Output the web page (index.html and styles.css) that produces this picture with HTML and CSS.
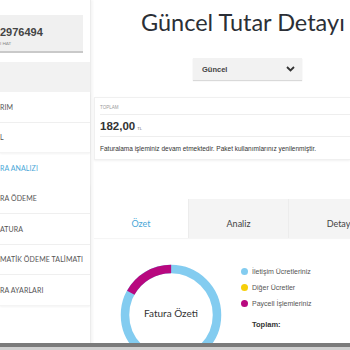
FILE: index.html
```html
<!DOCTYPE html>
<html lang="tr">
<head>
<meta charset="utf-8">
<link rel="stylesheet" href="styles.css">
</head>
<body>
<div class="page">
  <aside class="sidebar">
    <div class="account">
      <div class="acc-num">2976494</div>
      <div class="acc-sub">I HAT</div>
    </div>
    <div class="band"></div>
    <ul class="group">
      <li class="item">RIM</li>
      <li class="item">L</li>
    </ul>
    <div class="item active">RA ANALIZI</div>
    <ul class="group">
      <li class="item">RA ÖDEME</li>
      <li class="item">ATURA</li>
      <li class="item">MATİK ÖDEME TALİMATI</li>
      <li class="item">RA AYARLARI</li>
    </ul>
  </aside>
  <main class="main">
    <h1 class="title">Güncel Tutar Detayı</h1>
    <div class="select">
      <span>Güncel</span>
      <svg class="chev" width="9" height="6" viewBox="0 0 9 6"><path d="M1 1 L4.5 4.5 L8 1" fill="none" stroke="#333" stroke-width="1.8"/></svg>
    </div>
    <section class="card">
      <div class="label">TOPLAM</div>
      <div class="amount">182,00<span class="cur">TL</span></div>
      <p class="note">Faturalama işleminiz devam etmektedir. Paket kullanımlarınız yenilenmiştir.</p>
    </section>
    <section class="panel">
      <div class="tabs">
        <div class="tab on">Özet</div>
        <div class="tab">Analiz</div>
        <div class="tab">Detay</div>
      </div>
      <div class="chart-row">
        <div class="donut">
          <svg width="104" height="104" viewBox="0 0 104 104">
            <circle cx="52" cy="52" r="46" fill="none" stroke="#83ccf0" stroke-width="8.5"/>
            <circle cx="52" cy="52" r="46" fill="none" stroke="#b8087f" stroke-width="8.5" stroke-dasharray="49 300" transform="rotate(-151 52 52)"/>
          </svg>
          <span class="donut-label">Fatura Özeti</span>
        </div>
        <ul class="legend">
          <li><i class="dot blue"></i>İletişim Ücretleriniz</li>
          <li><i class="dot yellow"></i>Diğer Ücretler</li>
          <li><i class="dot pink"></i>Paycell İşlemleriniz</li>
          <li class="total">Toplam:</li>
        </ul>
      </div>
    </section>
  </main>
</div>
<div class="hbar"></div>
</body>
</html>
```
FILE: styles.css
```css
* { box-sizing: border-box; }
html, body { margin: 0; padding: 0; background: #fff; overflow: hidden; height: 350px; }
body { font-family: "Liberation Sans", Arial, sans-serif; color: #333; }
.page { display: flex; width: 350px; height: 350px; overflow: hidden; }
.sidebar {
  width: 91px; flex: none; padding-top: 15px;
  border-right: 1px solid #ececec;
  box-shadow: 2px 0 2px rgba(0,0,0,0.04);
  font-family: "Lato", sans-serif;
}
.account {
  height: 38px; margin-right: 7px; background: #f0f0f0;
  border-bottom: 2px solid #c9c9c9; padding-top: 11px;
}
.acc-num { font-family: "Liberation Sans", Arial, sans-serif; font-weight: bold; font-size: 11px; color: #444; line-height: 13px; }
.acc-sub { font-size: 4.5px; color: #888; margin-top: 2px; line-height: 5px; }
.band { height: 30px; background: #f2f2f2; margin-top: 9px; }
.group { list-style: none; margin: 0; padding: 0; background: #fff; box-shadow: 0 1px 2px rgba(0,0,0,0.05); }
.item {
  height: 30.5px; display: flex; align-items: center;
  font-size: 7px; color: #555; letter-spacing: 0.1px;
  border-bottom: 1px solid #efefef; white-space: nowrap;
}
.group .item:last-child { border-bottom: 1px solid #f4f4f4; }
.item.active { color: #4aa8d8; border-bottom: none; }
.main { flex: 1; min-width: 0; padding-left: 3px; overflow: hidden; }
.title {
  margin: 8px 0 0 47px; font-family: "Lato", sans-serif; font-weight: 400;
  font-size: 23.5px; line-height: 29px; color: #2b2f36; white-space: nowrap;
}
.select {
  margin: 21px 0 0 99px; width: 109px; height: 22px; background: #f2f2f2;
  box-shadow: 0 1px 1px rgba(0,0,0,0.15);
  display: flex; align-items: center; justify-content: space-between;
  padding: 0 7px 0 9px; font-size: 7.5px; font-weight: bold; color: #444;
}
.card {
  margin-top: 17px; height: 63px; border: 1px solid #f0f0f0; border-right: none;
  box-shadow: 0 1px 2px rgba(0,0,0,0.06);
  padding: 6px 0 0 5px; margin-left: 0;
}
.label { font-size: 4.5px; color: #999; height: 11px; border-bottom: 1px solid #eee; padding-top: 1px; }
.amount { font-size: 11.5px; font-weight: bold; color: #333; height: 22px; line-height: 22px; border-bottom: 1px solid #eee; }
.cur { font-size: 4px; font-weight: normal; margin-left: 2px; color: #666; }
.note { margin: 8px 0 0; font-size: 6.5px; color: #333; white-space: nowrap; }
.panel { margin-top: 39px; }
.tabs { display: flex; height: 39px; box-shadow: 0 1px 1px rgba(0,0,0,0.04); }
.tab {
  width: 100px; flex: none; display: flex; align-items: center; justify-content: center;
  background: #f4f4f4; font-family: "Lato", sans-serif; font-size: 9px; color: #444;
  border-left: 1px solid #ececec; padding-top: 10px;
}
.tab.on { background: #fff; color: #4aa8d8; width: 94px; border-left: none; }
.chart-row { display: flex; padding-top: 25px; }
.donut { position: relative; width: 104px; height: 104px; margin-left: 25px; flex: none; }
.donut svg { display: block; }
.donut-label {
  position: absolute; left: 0; right: 0; top: 44px; text-align: center;
  font-family: "Lato", sans-serif; font-size: 10px; color: #333;
}
.legend { list-style: none; margin: 0 0 0 18px; padding: 0; font-size: 7px; color: #555; }
.legend li { height: 16px; display: flex; align-items: center; }
.dot { width: 7px; height: 7px; border-radius: 50%; margin-right: 4px; display: inline-block; }
.blue { background: #83ccf0; }
.yellow { background: #f6cf0a; }
.pink { background: #b8087f; }
.legend .total { font-weight: bold; color: #333; padding-left: 11px; margin-top: 5px; font-size: 7.5px; }
.hbar {
  position: fixed; left: 0; right: 0; bottom: 0; height: 7px;
  background: #d0d0d0; border-top: 4px solid #7b7b7b;
}
```
